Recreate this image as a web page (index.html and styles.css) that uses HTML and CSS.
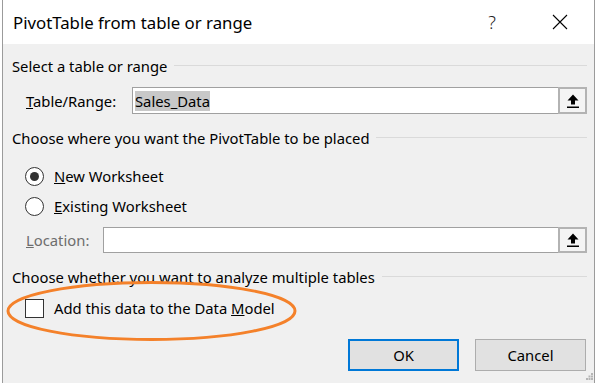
FILE: index.html
```html
<!DOCTYPE html>
<html lang="en">
<head>
    <meta charset="UTF-8">
    <meta name="viewport" content="width=device-width, initial-scale=1.0">
    <title>PivotTable from table or range</title>
    <link rel="stylesheet" href="styles.css">
</head>
<body>
    <div class="dialog">
        <div class="titlebar">
            <span class="title">PivotTable from table or range</span>
            <span class="cap-btn help">?</span>
            <span class="cap-btn close">
                <svg width="16" height="16" viewBox="0 0 16 16"><path d="M1 1 L15 15 M15 1 L1 15" stroke="#000" stroke-width="1.1" fill="none"/></svg>
            </span>
        </div>

        <div class="content">
            <div class="group-head"><span>Select a table or range</span></div>
            <div class="field-row table-row">
                <label class="field-label"><u>T</u>able/Range:</label>
                <div class="ref-field">
                    <div class="ref-text"><span class="sel">Sales_Data</span></div>
                    <button class="ref-btn">
                        <svg width="12" height="14" viewBox="0 0 12 14"><path d="M6 0.5 L11.5 6.5 H8 V10.5 H4 V6.5 H0.5 Z" fill="#000"/><rect x="0" y="12.5" width="12" height="1.5" fill="#000"/></svg>
                    </button>
                </div>
            </div>

            <div class="group-head head-place"><span>Choose where you want the PivotTable to be placed</span></div>
            <div class="options">
                <div class="radio-row"><span class="radio on"></span><span><u>N</u>ew Worksheet</span></div>
                <div class="radio-row"><span class="radio"></span><span><u>E</u>xisting Worksheet</span></div>
            </div>
            <div class="field-row location-row">
                <label class="field-label disabled"><u>L</u>ocation:</label>
                <div class="ref-field">
                    <div class="ref-text"></div>
                    <button class="ref-btn">
                        <svg width="12" height="14" viewBox="0 0 12 14"><path d="M6 0.5 L11.5 6.5 H8 V10.5 H4 V6.5 H0.5 Z" fill="#000"/><rect x="0" y="12.5" width="12" height="1.5" fill="#000"/></svg>
                    </button>
                </div>
            </div>

            <div class="group-head head-model"><span>Choose whether you want to analyze multiple tables</span></div>
            <div class="check-row"><span class="checkbox"></span><span>Add this data to the Data <u>M</u>odel</span></div>

            <div class="actions">
                <button class="btn default">OK</button>
                <button class="btn">Cancel</button>
            </div>
        </div>

        <!-- hand-drawn highlight over the data model option -->
        <svg class="annotation" width="593" height="383" viewBox="0 0 593 383">
            <ellipse cx="148.5" cy="311" rx="143.5" ry="28.5" fill="none" stroke="#f4812a" stroke-width="3"/>
        </svg>

        <svg class="grip" width="7" height="7" viewBox="0 0 7 7">
            <rect x="5" y="0" width="2" height="2" fill="#b5b5b5"/>
            <rect x="2.5" y="2.5" width="2" height="2" fill="#b5b5b5"/>
            <rect x="5" y="2.5" width="2" height="2" fill="#b5b5b5"/>
            <rect x="0" y="5" width="2" height="2" fill="#b5b5b5"/>
            <rect x="2.5" y="5" width="2" height="2" fill="#b5b5b5"/>
            <rect x="5" y="5" width="2" height="2" fill="#b5b5b5"/>
        </svg>
    </div>
</body>
</html>
```

FILE: styles.css
```css
body {
    margin: 0;
    background-color: #fff;
    font-family: "Noto Sans", "Open Sans", sans-serif;
    overflow: hidden;
}
.dialog {
    position: relative;
    margin-left: 2px;
    width: 591px;
    height: 383px;
    border-left: 1px solid #9b9b9b;
    border-right: 1px solid #9b9b9b;
    background-color: #f0f0f0;
    color: #000;
    font-size: 14.8px;
    overflow: hidden;
}
.titlebar {
    height: 44px;
    background-color: #fff;
    display: flex;
    align-items: center;
}
.title {
    flex: 1;
    padding-left: 10px;
    font-size: 16.8px;
}
.cap-btn {
    width: 68px;
    height: 44px;
    display: flex;
    align-items: center;
    justify-content: center;
}
.help {
    font-size: 18px;
    font-weight: 300;
    color: #222;
}
.content {
    padding: 12px 7px 0 9px;
}
.group-head {
    display: flex;
    align-items: center;
    gap: 7px;
    height: 20px;
    line-height: 20px;
    white-space: nowrap;
}
.group-head::after {
    content: "";
    flex: 1;
    height: 1px;
    margin-top: -2px;
    background-color: #dadada;
}
.head-place,
.head-model {
    margin-top: 14px;
}
.field-row {
    display: flex;
    align-items: center;
}
.table-row {
    margin-top: 11px;
    height: 27px;
}
.location-row {
    margin-top: 6px;
    height: 26px;
}
.field-label {
    margin-left: 14px;
    width: 106px;
    white-space: nowrap;
}
.location-row .field-label {
    width: 77px;
}
.field-label.disabled {
    color: #6d6d6d;
}
.ref-field {
    flex: 1;
    display: flex;
    height: 100%;
}
.ref-text {
    flex: 1;
    display: flex;
    align-items: center;
    padding-left: 2px;
    background-color: #fff;
    border: 1px solid #a0a0a0;
    border-right: none;
}
.sel {
    background-color: #c8c8c8;
    line-height: 20px;
}
.ref-btn {
    width: 29px;
    box-sizing: border-box;
    padding: 0;
    border: 2px solid #b3b3b3;
    background-color: #f4f4f4;
    display: flex;
    align-items: center;
    justify-content: center;
}
.options {
    margin-top: 13px;
}
.radio-row,
.check-row {
    display: flex;
    align-items: center;
    gap: 10px;
    height: 30px;
    padding-left: 13px;
}
.radio {
    width: 19px;
    height: 19px;
    box-sizing: border-box;
    border: 1px solid #333;
    border-radius: 50%;
    background-color: #fff;
    display: flex;
    align-items: center;
    justify-content: center;
}
.radio.on::after {
    content: "";
    width: 9px;
    height: 9px;
    border-radius: 50%;
    background-color: #333;
}
.check-row {
    margin-top: 6px;
}
.checkbox {
    width: 19px;
    height: 19px;
    box-sizing: border-box;
    border: 1px solid #333;
    background-color: #fff;
}
.actions {
    margin-top: 16px;
    padding-right: 1px;
    display: flex;
    justify-content: flex-end;
    gap: 16px;
}
.btn {
    width: 111px;
    height: 32px;
    box-sizing: border-box;
    border: 1px solid #adadad;
    background-color: #e1e1e1;
    font-family: inherit;
    font-size: 14.8px;
    color: #000;
    padding: 0;
}
.btn.default {
    border: 2px solid #0078d7;
}
.annotation {
    position: absolute;
    left: 0;
    top: 0;
    pointer-events: none;
}
.grip {
    position: absolute;
    right: 1px;
    bottom: 3px;
}
```
